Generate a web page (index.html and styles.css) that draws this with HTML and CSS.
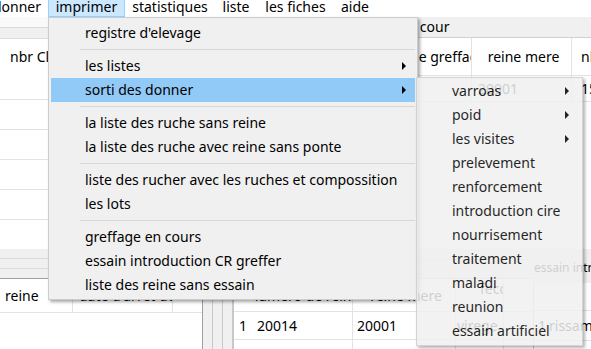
FILE: index.html
```html
<!DOCTYPE html>
<html lang="fr">
<head>
<meta charset="utf-8">
<title>Rucher</title>
<link rel="stylesheet" href="styles.css">
</head>
<body>
<nav class="menubar">
  <span class="mb-item w-donner">donner</span>
  <span class="mb-item w-imprimer active">imprimer</span>
  <span class="mb-item w-stat">statistiques</span>
  <span class="mb-item w-liste">liste</span>
  <span class="mb-item w-fiches">les fiches</span>
  <span class="mb-item w-aide">aide</span>
</nav>

<main class="workspace">
  <section class="top-row">
    <div class="pane left-top">
      <div class="strip"></div>
      <div class="grid-box">
        <div class="hdr tall"><span class="cell c-nbr">nbr Cloture</span></div>
        <div class="row"></div>
        <div class="row"></div>
        <div class="row"></div>
        <div class="row"></div>
        <div class="row"></div>
      </div>
    </div>
    <div class="pane right-top">
      <div class="gb-title"><span class="gb-text">greffage en cour</span></div>
      <div class="grid-box">
        <div class="hdr"><span class="cell c-date">date de greffage</span><span class="cell c-mere">reine mere</span><span class="cell c-n">nbr</span></div>
        <div class="row"><span class="cell c-date"></span><span class="cell c-mere">20001</span><span class="cell c-n">15</span></div>
      </div>
    </div>
  </section>

  <section class="bottom-row">
    <div class="pane left-bot">
      <div class="bands"><span></span><span></span><span></span></div>
      <div class="grid-box">
        <div class="hdr"><span class="cell c-reine">reine</span><span class="cell c-arret">date d'arret de ponte</span></div>
      </div>
    </div>
    <div class="pane mid-bot">
      <div class="frames"><span></span><span></span><span></span></div>
      <div class="mid-body">
        <div class="mid-band"></div>
        <div class="grid-box">
          <div class="hdr"><span class="cell c-rn"></span><span class="cell c-num">numero de reine</span><span class="cell c-rm">reine mere</span><span class="cell c-fec">fecondation</span><span class="cell c-x"></span></div>
          <div class="row"><span class="cell c-rn">1</span><span class="cell c-num">20014</span><span class="cell c-rm">20001</span><span class="cell c-fec">virege</span><span class="cell c-x"></span></div>
          <div class="row"><span class="cell c-rn"></span><span class="cell c-num"></span><span class="cell c-rm"></span><span class="cell c-fec"></span><span class="cell c-x"></span></div>
        </div>
      </div>
    </div>
    <div class="pane right-bot">
      <div class="gb-title"><span class="gb-text">essain introduction</span></div>
      <div class="grid-box">
        <div class="hdr"></div>
        <div class="row"><span class="cell c-rn2">1</span><span class="cell c-ris">rissam</span></div>
      </div>
    </div>
  </section>
</main>

<div class="menu main-menu">
  <div class="mi">registre d'elevage</div>
  <div class="sep"></div>
  <div class="mi sub">les listes</div>
  <div class="mi sub hl">sorti des donner</div>
  <div class="sep"></div>
  <div class="mi">la liste des ruche sans reine</div>
  <div class="mi">la liste des ruche avec reine sans ponte</div>
  <div class="sep"></div>
  <div class="mi">liste des rucher avec les ruches et compossition</div>
  <div class="mi">les lots</div>
  <div class="sep"></div>
  <div class="mi">greffage en cours</div>
  <div class="mi">essain introduction CR greffer</div>
  <div class="mi">liste des reine sans essain</div>
</div>

<div class="menu sub-menu">
  <div class="mi sub">varroas</div>
  <div class="mi sub">poid</div>
  <div class="mi sub">les visites</div>
  <div class="mi">prelevement</div>
  <div class="mi">renforcement</div>
  <div class="mi">introduction cire</div>
  <div class="mi">nourrisement</div>
  <div class="mi">traitement</div>
  <div class="mi">maladi</div>
  <div class="mi">reunion</div>
  <div class="mi">essain artificiel</div>
</div>
</body>
</html>
```

FILE: styles.css
```css
* { box-sizing: border-box; }
html, body { margin: 0; padding: 0; }
body {
  width: 591px;
  height: 349px;
  overflow: hidden;
  position: relative;
  background: #f0f0f0;
  font-family: "Noto Sans", "DejaVu Sans", sans-serif;
  font-size: 14px;
  color: #000;
}

/* menu bar */
.menubar {
  display: flex;
  height: 17px;
  background: #fff;
}
.mb-item {
  display: flex;
  justify-content: center;
  align-items: center;
  height: 17px;
  line-height: 14px;
  padding-bottom: 3px;
  white-space: nowrap;
  border: 1px solid transparent;
  border-top: 0;
  flex: none;
}
.mb-item.active { background: #cce8ff; border-color: #99d1ff; }
.w-donner { width: 62px; margin-left: -14px; }
.w-imprimer { width: 77px; }
.w-stat { width: 90px; }
.w-liste { width: 42px; }
.w-fiches { width: 77px; }
.w-aide { width: 42px; }

/* workspace behind menus */
.workspace {
  display: flex;
  flex-direction: column;
  height: 332px;
  overflow: hidden;
}
.top-row { display: flex; height: 232px; flex: none; }
.bottom-row { display: flex; flex: 1; min-height: 0; }
.pane { display: flex; flex-direction: column; overflow: hidden; }
.left-top { width: 372px; }
.right-top { flex: 1; }
.strip { height: 11px; background: #f9f9f9; border-bottom: 1px solid #d9d9d9; flex: none; }
.left-top .grid-box { margin-top: 10px; border-top: 1px solid #dcdcdc; border-bottom: 1px solid #a0a0a0; }
.grid-box { background: #fff; flex: 1; }
.hdr, .row { display: flex; border-bottom: 1px solid #e3e3e3; }
.hdr { height: 35px; align-items: center; }
.hdr.tall { height: 61px; align-items: flex-start; padding-top: 8px; }
.row { height: 30px; align-items: center; }
.cell {
  white-space: nowrap;
  overflow: hidden;
  flex: none;
  padding-left: 4px;
  border-right: 1px solid #e3e3e3;
  height: 100%;
  display: flex;
  align-items: center;
}
.hdr.tall .cell { border: 0; height: auto; }
.c-nbr { width: 120px; padding-left: 10px; }

.gb-title { height: 20px; display: flex; align-items: flex-start; flex: none; }
.gb-text { line-height: 20px; white-space: nowrap; }
.right-top .gb-text { margin-left: -32px; }
.right-top .grid-box { border-top: 1px solid #d0d0d0; }
.right-top .hdr { height: 38px; }
.c-date { width: 100px; padding-left: 5px; }
.c-mere { width: 100px; justify-content: center; }
.c-n { width: 40px; padding-left: 9px; }
.right-top .row { height: 26px; }
.right-top .row .c-mere { justify-content: flex-start; padding-left: 6px; }

/* bottom */
.left-bot { width: 203px; border-right: 1px solid #a0a0a0; }
.bands { height: 30px; display: flex; flex-direction: column; border-bottom: 1px solid #a0a0a0; flex: none; }
.bands span { flex: 1; border-bottom: 1px solid #dcdcdc; }
.bands span:last-child { border-bottom: 0; }
.c-reine { width: 73px; padding-left: 5px; }
.c-arret { width: 100px; padding-left: 6px; }
.left-bot .hdr { height: 34px; }

.mid-bot { width: 330px; flex-direction: row; }
.frames { display: flex; width: 30px; flex: none; }
.frames span { width: 10px; border-right: 1px solid #c8c8c8; }
.mid-body { flex: 1; display: flex; flex-direction: column; }
.mid-band { height: 30px; border-bottom: 1px solid #d0d0d0; flex: none; }
.mid-band { background: linear-gradient(#f0f0f0 0 10px, #dcdcdc 10px 11px, #f0f0f0 11px); }
.mid-body .grid-box { border-left: 1px solid #c8c8c8; }
.mid-bot .hdr { height: 33px; }
.mid-bot .row { height: 28px; }
.c-rn { width: 19px; padding-left: 5px; border-right: 0; }
.c-num { width: 100px; }
.c-rm { width: 103px; }
.c-fec { width: 48px; padding-left: 1px; }
.c-x { width: 30px; }
.mid-bot .hdr .c-num, .mid-bot .hdr .c-rm { justify-content: center; }
.mid-bot .hdr .c-fec { align-items: flex-start; padding-left: 24px; line-height: 20px; }

.right-bot { flex: 1; }
.right-bot .gb-title { height: 30px; align-items: center; margin-top: 4px; }
.right-bot .gb-text { font-size: 12px; padding-left: 1px; }
.right-bot .grid-box { border-left: 1px solid #c8c8c8; }
.right-bot .hdr { height: 28px; }
.c-rn2 { width: 15px; padding-left: 4px; border: 0; }
.c-ris { width: 60px; padding-left: 0; border: 0; }

/* menus */
.menu {
  position: absolute;
  background: #f0f0f0;
  border: 1px solid #cccccc;
  box-shadow: 2px 2px 3px rgba(0, 0, 0, 0.35);
  padding: 3px 2px 2px;
}
.main-menu { left: 48px; top: 17px; width: 370px; }
.sub-menu { left: 416px; top: 77px; width: 167px; padding-top: 1px; opacity: 0.86; }
.mi {
  height: 24px;
  line-height: 24px;
  padding-left: 34px;
  white-space: nowrap;
  position: relative;
}
.sub-menu .mi { padding-left: 33px; }
.mi.hl { background: #91c9f7; }
.mi.sub::after {
  content: "";
  position: absolute;
  right: 9px;
  top: 8px;
  border-left: 4px solid #000;
  border-top: 4px solid transparent;
  border-bottom: 4px solid transparent;
}
.sub-menu .mi.sub::after { right: 11px; }
.sep { height: 9px; position: relative; }
.sep::before {
  content: "";
  position: absolute;
  left: 29px;
  right: 0;
  top: 4px;
  border-top: 1px solid #d7d7d7;
}
```
